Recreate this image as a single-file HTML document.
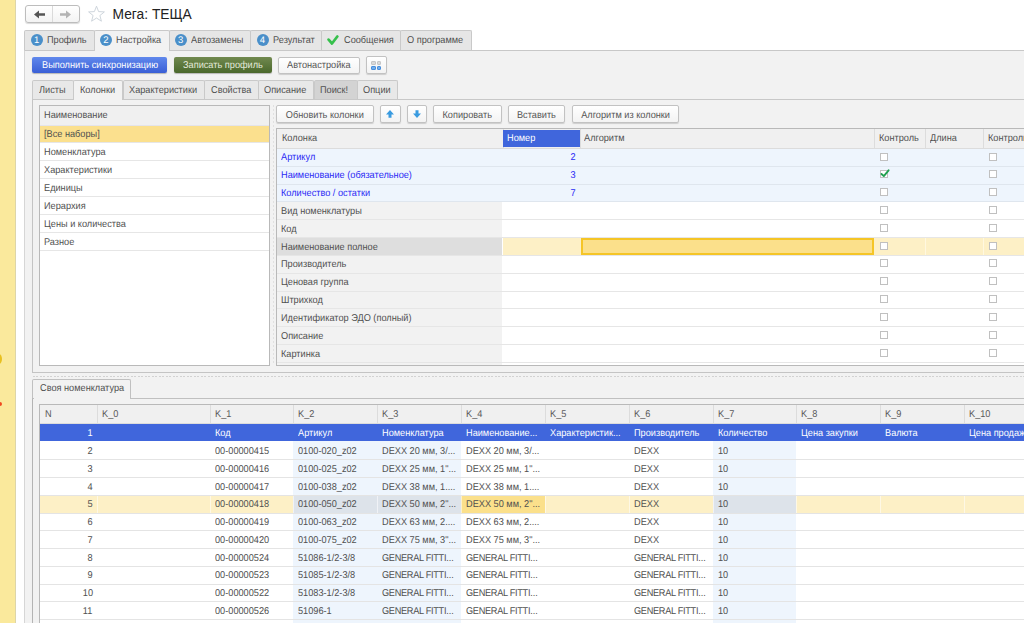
<!DOCTYPE html><html><head><meta charset='utf-8'><style>
*{margin:0;padding:0;box-sizing:border-box}
html,body{width:1024px;height:623px;overflow:hidden;background:#fff;font-family:"Liberation Sans",sans-serif;font-size:9.9px;color:#505050;text-rendering:geometricPrecision}
.a{position:absolute}
.t{position:absolute;white-space:nowrap;line-height:1;transform:scaleX(0.93);transform-origin:0 0}
.r{transform-origin:100% 0}
.c{transform-origin:50% 0}
.btn{position:absolute;border:1px solid #c2c2c2;border-radius:2px;background:linear-gradient(#fff,#f3f3f3);box-shadow:0 1px 1px rgba(0,0,0,.15)}
.bt{color:#555}
</style></head><body>
<div class='a' style='left:0px;top:0px;width:16px;height:623px;background:#fae99c;border-right:1px solid #ddd5a8'></div>
<div class='a' style='left:-4px;top:354px;width:6px;height:10px;background:#e8c020;border-radius:50%'></div>
<div class='a' style='left:-3px;top:402px;width:5px;height:4px;background:#f04a20;border-radius:50%'></div>
<div class='btn' style='left:24.5px;top:5px;width:55px;height:18px;border-radius:3px;border-color:#bdbdbd'></div>
<div class='a' style='left:52px;top:6px;width:1px;height:16px;background:#dadada'></div>
<svg class='a' style='left:31.5px;top:9px' width='16' height='11' viewBox='0 0 16 11'><path d='M2 5.5 L7 1.5 V4.3 H13 V6.7 H7 V9.5 Z' fill='#555'/></svg>
<svg class='a' style='left:57px;top:9px' width='16' height='11' viewBox='0 0 16 11'><path d='M14 5.5 L9 1.5 V4.3 H3 V6.7 H9 V9.5 Z' fill='#b4b4b4'/></svg>
<svg class='a' style='left:87px;top:5px' width='19' height='18' viewBox='0 0 19 18'><path d='M9.5 1.2 L11.6 6.6 L17.4 6.9 L12.9 10.5 L14.4 16.2 L9.5 13 L4.6 16.2 L6.1 10.5 L1.6 6.9 L7.4 6.6 Z' fill='none' stroke='#c8d0d8' stroke-width='0.9'/></svg>
<div class='t' style='left:112.5px;top:8.20px;color:#222;font-size:13.8px;transform:none;text-rendering:auto'>Мега: ТЕЩА</div>
<div class='a' style='left:24px;top:50px;width:1010px;height:600px;background:#f2f2f2;border-top:1px solid #c8c8c8;border-left:1px solid #d6d6d6'></div>
<div class='a' style='left:24px;top:30px;width:71px;height:20px;background:#e6e6e6;border:1px solid #c9c9c9;border-bottom:none;border-radius:2px 2px 0 0'></div>
<div class='a' style='left:30.700000000000003px;top:34px;width:12px;height:12px;border-radius:50%;background:#4a8fc9;color:#fff;font-size:9.5px;line-height:13px;text-align:center;font-weight:normal'>1</div>
<div class='t' style='left:47.2px;top:36.00px;color:#505050'>Профиль</div>
<div class='a' style='left:94px;top:30px;width:76px;height:21px;background:#f2f2f2;border:1px solid #c9c9c9;border-bottom:none;border-radius:2px 2px 0 0'></div>
<div class='a' style='left:99.8px;top:34px;width:12px;height:12px;border-radius:50%;background:#4a8fc9;color:#fff;font-size:9.5px;line-height:13px;text-align:center;font-weight:normal'>2</div>
<div class='t' style='left:116.3px;top:36.00px;color:#505050'>Настройка</div>
<div class='a' style='left:169px;top:30px;width:82px;height:20px;background:#e6e6e6;border:1px solid #c9c9c9;border-bottom:none;border-radius:2px 2px 0 0'></div>
<div class='a' style='left:174.6px;top:34px;width:12px;height:12px;border-radius:50%;background:#4a8fc9;color:#fff;font-size:9.5px;line-height:13px;text-align:center;font-weight:normal'>3</div>
<div class='t' style='left:191.1px;top:36.00px;color:#505050'>Автозамены</div>
<div class='a' style='left:250px;top:30px;width:72px;height:20px;background:#e6e6e6;border:1px solid #c9c9c9;border-bottom:none;border-radius:2px 2px 0 0'></div>
<div class='a' style='left:256.5px;top:34px;width:12px;height:12px;border-radius:50%;background:#4a8fc9;color:#fff;font-size:9.5px;line-height:13px;text-align:center;font-weight:normal'>4</div>
<div class='t' style='left:273.0px;top:36.00px;color:#505050'>Результат</div>
<div class='a' style='left:321px;top:30px;width:80px;height:20px;background:#e6e6e6;border:1px solid #c9c9c9;border-bottom:none;border-radius:2px 2px 0 0'></div>
<svg class='a' style='left:326px;top:34px' width='13' height='12' viewBox='0 0 13 12'><path d='M2.6 5.6 L6 9.5 L11.3 2.5' fill='none' stroke='#36c04c' stroke-width='2.7' stroke-linecap='round' stroke-linejoin='round'/></svg>
<div class='t' style='left:343.8px;top:36.00px;color:#505050'>Сообщения</div>
<div class='a' style='left:400px;top:30px;width:72px;height:20px;background:#e6e6e6;border:1px solid #c9c9c9;border-bottom:none;border-radius:2px 2px 0 0'></div>
<div class='t' style='left:407.1px;top:36.00px;color:#505050'>О программе</div>
<div class='a' style='left:32px;top:57px;width:135px;height:16px;border-radius:2px;background:linear-gradient(#6088ec,#3a5fd6);box-shadow:0 1px 1px rgba(0,0,0,.25)'></div>
<div class='t' style='left:41.5px;top:61.00px;color:#fff'>Выполнить синхронизацию</div>
<div class='a' style='left:174px;top:57px;width:98px;height:16px;border-radius:2px;background:linear-gradient(#71894f,#4a682c);box-shadow:0 1px 1px rgba(0,0,0,.25)'></div>
<div class='t' style='left:182.8px;top:61.00px;color:#e4eadb'>Записать профиль</div>
<div class='btn' style='left:277.8px;top:56.5px;width:82px;height:17px;'></div>
<div class='t' style='left:287px;top:61.00px;color:#555'>Автонастройка</div>
<div class='btn' style='left:365.8px;top:56.2px;width:21px;height:17.4px;'></div>
<div class='a' style='left:371px;top:61px;width:4.5px;height:3.5px;background:#dadada;border:1px solid #c6c6c6;border-radius:1px'></div>
<div class='a' style='left:376.5px;top:61px;width:4.5px;height:3.5px;background:#dadada;border:1px solid #c6c6c6;border-radius:1px'></div>
<div class='a' style='left:371px;top:65.5px;width:4.5px;height:4.5px;background:#72aeec;border:1px solid #4a8fdc;border-radius:1px'></div>
<div class='a' style='left:376.5px;top:65.5px;width:4.5px;height:4.5px;background:#72aeec;border:1px solid #4a8fdc;border-radius:1px'></div>
<div class='a' style='left:32px;top:80px;width:41.7px;height:19px;background:#e8e8e8;border:1px solid #c9c9c9;border-bottom:none;border-radius:2px 2px 0 0'></div>
<div class='t' style='left:38.80px;top:86px'>Листы</div>
<div class='a' style='left:72.7px;top:80px;width:50.8px;height:20px;background:#f2f2f2;border:1px solid #c9c9c9;border-bottom:none;border-radius:2px 2px 0 0'></div>
<div class='t' style='left:79.50px;top:86px'>Колонки</div>
<div class='a' style='left:122.5px;top:80px;width:82.5px;height:19px;background:#e8e8e8;border:1px solid #c9c9c9;border-bottom:none;border-radius:2px 2px 0 0'></div>
<div class='t' style='left:129.30px;top:86px'>Характеристики</div>
<div class='a' style='left:204px;top:80px;width:54.60000000000002px;height:19px;background:#e8e8e8;border:1px solid #c9c9c9;border-bottom:none;border-radius:2px 2px 0 0'></div>
<div class='t' style='left:210.80px;top:86px'>Свойства</div>
<div class='a' style='left:257.6px;top:80px;width:56.89999999999998px;height:19px;background:#e8e8e8;border:1px solid #c9c9c9;border-bottom:none;border-radius:2px 2px 0 0'></div>
<div class='t' style='left:264.40px;top:86px'>Описание</div>
<div class='a' style='left:313.5px;top:80px;width:44.0px;height:19px;background:#d3d3d3;border:1px solid #c9c9c9;border-bottom:none;border-radius:2px 2px 0 0'></div>
<div class='t' style='left:320.30px;top:86px'>Поиск!</div>
<div class='a' style='left:356.5px;top:80px;width:41.80000000000001px;height:19px;background:#e8e8e8;border:1px solid #c9c9c9;border-bottom:none;border-radius:2px 2px 0 0'></div>
<div class='t' style='left:363.30px;top:86px'>Опции</div>
<div class='a' style='left:32px;top:99px;width:1000px;height:273.5px;border-top:1px solid #c8c8c8;border-left:1px solid #c4c4c4;border-bottom:1px solid #c4c4c4'></div>
<div class='a' style='left:73.7px;top:99px;width:48.8px;height:1px;background:#f2f2f2'></div>
<div class='a' style='left:95px;top:50px;width:74px;height:1px;background:#f2f2f2'></div>
<div class='a' style='left:39px;top:105px;width:231px;height:261px;background:#fff;border:1px solid #b9b9b9'></div>
<div class='a' style='left:40px;top:106px;width:229px;height:19px;background:#f0f0f0'></div>
<div class='a' style='left:40px;top:125px;width:229px;height:1px;background:#e4e4ea'></div>
<div class='t' style='left:44.2px;top:111.00px;'>Наименование</div>
<div class='a' style='left:40px;top:126px;width:229px;height:16px;background:#fbe08e'></div>
<div class='a' style='left:40px;top:142px;width:229px;height:1px;background:#e6e6e6'></div>
<div class='t' style='left:44.2px;top:130.00px;'>[Все наборы]</div>
<div class='a' style='left:40px;top:160px;width:229px;height:1px;background:#e6e6e6'></div>
<div class='t' style='left:44.2px;top:148.00px;'>Номенклатура</div>
<div class='a' style='left:40px;top:178px;width:229px;height:1px;background:#e6e6e6'></div>
<div class='t' style='left:44.2px;top:166.00px;'>Характеристики</div>
<div class='a' style='left:40px;top:196px;width:229px;height:1px;background:#e6e6e6'></div>
<div class='t' style='left:44.2px;top:184.00px;'>Единицы</div>
<div class='a' style='left:40px;top:214px;width:229px;height:1px;background:#e6e6e6'></div>
<div class='t' style='left:44.2px;top:202.00px;'>Иерархия</div>
<div class='a' style='left:40px;top:232px;width:229px;height:1px;background:#e6e6e6'></div>
<div class='t' style='left:44.2px;top:220.00px;'>Цены и количества</div>
<div class='a' style='left:40px;top:250px;width:229px;height:1px;background:#e6e6e6'></div>
<div class='t' style='left:44.2px;top:238.00px;'>Разное</div>
<div class='a' style='left:272.5px;top:105px;width:1px;height:260px;background:repeating-linear-gradient(#e0e0e0 0 2px,transparent 2px 4px)'></div>
<div class='a' style='left:32.5px;top:375.5px;width:992px;height:1px;background:repeating-linear-gradient(90deg,#d2d2d2 0 2px,transparent 2px 3.5px)'></div>
<div class='btn' style='left:276px;top:105px;width:97.60000000000002px;height:17.6px;'></div>
<div class='t c bt' style='left:276px;width:97.60000000000002px;text-align:center;top:111px'>Обновить колонки</div>
<div class='btn' style='left:380px;top:105px;width:20.5px;height:17.6px;'></div>
<div class='btn' style='left:406.5px;top:105px;width:20.30000000000001px;height:17.6px;'></div>
<div class='btn' style='left:433.4px;top:105px;width:68.5px;height:17.6px;'></div>
<div class='t c bt' style='left:433.4px;width:68.5px;text-align:center;top:111px'>Копировать</div>
<div class='btn' style='left:508.4px;top:105px;width:56.89999999999998px;height:17.6px;'></div>
<div class='t c bt' style='left:508.4px;width:56.89999999999998px;text-align:center;top:111px'>Вставить</div>
<div class='btn' style='left:571.6px;top:105px;width:107.19999999999993px;height:17.6px;'></div>
<div class='t c bt' style='left:571.6px;width:107.19999999999993px;text-align:center;top:111px'>Алгоритм из колонки</div>
<svg class='a' style='left:385px;top:109px' width='10' height='10' viewBox='0 0 10 10'><path d='M5 1 L9 5.5 H6.5 V8.8 H3.5 V5.5 H1 Z' fill='#3a9be0'/></svg>
<svg class='a' style='left:411.5px;top:109px' width='10' height='10' viewBox='0 0 10 10'><path d='M5 9 L9 4.5 H6.5 V1.2 H3.5 V4.5 H1 Z' fill='#3a9be0'/></svg>
<div class='a' style='left:276px;top:128px;width:760px;height:238px;background:#fff;border:1px solid #b9b9b9'></div>
<div class='a' style='left:277px;top:129px;width:760px;height:19px;background:#f0f0f0'></div>
<div class='a' style='left:277px;top:148px;width:760px;height:1px;background:#dcdcdc'></div>
<div class='a' style='left:503px;top:129px;width:1px;height:19px;background:#dcdcdc'></div>
<div class='a' style='left:580px;top:129px;width:1px;height:19px;background:#dcdcdc'></div>
<div class='a' style='left:874px;top:129px;width:1px;height:19px;background:#dcdcdc'></div>
<div class='a' style='left:925px;top:129px;width:1px;height:19px;background:#dcdcdc'></div>
<div class='a' style='left:983px;top:129px;width:1px;height:19px;background:#dcdcdc'></div>
<div class='a' style='left:503px;top:130px;width:77px;height:17px;background:#4066dc'></div>
<div class='t' style='left:281.59999999999997px;top:134.00px;color:#505050'>Колонка</div>
<div class='t' style='left:507.1px;top:134.00px;color:#fff'>Номер</div>
<div class='t' style='left:584.1999999999999px;top:134.00px;color:#505050'>Алгоритм</div>
<div class='t' style='left:878.5px;top:134.00px;color:#505050'>Контроль</div>
<div class='t' style='left:929.6999999999999px;top:134.00px;color:#505050'>Длина</div>
<div class='t' style='left:987.6999999999999px;top:134.00px;color:#505050'>Контроль</div>
<div class='a' style='left:277px;top:148px;width:760px;height:18px;background:#eef5fd'></div>
<div class='a' style='left:277px;top:166px;width:760px;height:18px;background:#eef5fd'></div>
<div class='a' style='left:277px;top:184px;width:760px;height:17px;background:#eef5fd'></div>
<div class='a' style='left:277px;top:202px;width:225px;height:17px;background:#f2f2f2'></div>
<div class='a' style='left:277px;top:220px;width:225px;height:17px;background:#f2f2f2'></div>
<div class='a' style='left:277px;top:238px;width:225px;height:17px;background:#dedede'></div>
<div class='a' style='left:503px;top:238px;width:760px;height:17px;background:#fdf0c6'></div>
<div class='a' style='left:277px;top:256px;width:225px;height:17px;background:#f2f2f2'></div>
<div class='a' style='left:277px;top:274px;width:225px;height:17px;background:#f2f2f2'></div>
<div class='a' style='left:277px;top:292px;width:225px;height:16px;background:#f2f2f2'></div>
<div class='a' style='left:277px;top:309px;width:225px;height:17px;background:#f2f2f2'></div>
<div class='a' style='left:277px;top:327px;width:225px;height:17px;background:#f2f2f2'></div>
<div class='a' style='left:277px;top:345px;width:225px;height:20px;background:#f2f2f2'></div>
<div class='a' style='left:925px;top:238px;width:1px;height:17px;background:#fff8e0'></div>
<div class='a' style='left:983px;top:238px;width:1px;height:17px;background:#fff8e0'></div>
<div class='a' style='left:925px;top:238px;width:1px;height:17px;background:#fff8e0'></div>
<div class='a' style='left:277px;top:166px;width:760px;height:1px;background:#dfe6ee'></div>
<div class='a' style='left:277px;top:184px;width:760px;height:1px;background:#dfe6ee'></div>
<div class='a' style='left:277px;top:201px;width:760px;height:1px;background:#dfe6ee'></div>
<div class='a' style='left:277px;top:219px;width:760px;height:1px;background:#e6e6e6'></div>
<div class='a' style='left:277px;top:237px;width:760px;height:1px;background:#e6e6e6'></div>
<div class='a' style='left:277px;top:255px;width:760px;height:1px;background:#e6e6e6'></div>
<div class='a' style='left:277px;top:273px;width:760px;height:1px;background:#e6e6e6'></div>
<div class='a' style='left:277px;top:291px;width:760px;height:1px;background:#e6e6e6'></div>
<div class='a' style='left:277px;top:308px;width:760px;height:1px;background:#e6e6e6'></div>
<div class='a' style='left:277px;top:326px;width:760px;height:1px;background:#e6e6e6'></div>
<div class='a' style='left:277px;top:344px;width:760px;height:1px;background:#e6e6e6'></div>
<div class='a' style='left:277px;top:362px;width:760px;height:1px;background:#e6e6e6'></div>
<div class='a' style='left:277px;top:148px;width:760px;height:1px;background:#dcdcdc'></div>
<div class='t' style='left:281.2px;top:153.00px;color:#2a2af5'>Артикул</div>
<div class='t r' style='right:448.20000000000005px;top:153.00px;color:#2a2af5'>2</div>
<div class='a' style='left:880px;top:152.5px;width:8px;height:8px;background:#fff;border:1px solid #c0c0c0'></div>
<div class='a' style='left:989px;top:152.5px;width:8px;height:8px;background:#fff;border:1px solid #c0c0c0'></div>
<div class='t' style='left:281.2px;top:171.00px;color:#2a2af5'>Наименование (обязательное)</div>
<div class='t r' style='right:448.20000000000005px;top:171.00px;color:#2a2af5'>3</div>
<div class='a' style='left:880px;top:170.32999999999998px;width:8px;height:8px;background:#fff;border:1px solid #c0c0c0'></div>
<div class='a' style='left:989px;top:170.32999999999998px;width:8px;height:8px;background:#fff;border:1px solid #c0c0c0'></div>
<svg class='a' style='left:879px;top:168.1px' width='12' height='11' viewBox='0 0 12 11'><path d='M2.5 6 L4.8 8.1 L9.6 2.3' fill='none' stroke='#21a050' stroke-width='1.9' stroke-linecap='round' stroke-linejoin='round'/></svg>
<div class='t' style='left:281.2px;top:189.00px;color:#2a2af5'>Количество / остатки</div>
<div class='t r' style='right:448.20000000000005px;top:189.00px;color:#2a2af5'>7</div>
<div class='a' style='left:880px;top:188.16px;width:8px;height:8px;background:#fff;border:1px solid #c0c0c0'></div>
<div class='a' style='left:989px;top:188.16px;width:8px;height:8px;background:#fff;border:1px solid #c0c0c0'></div>
<div class='t' style='left:281.2px;top:207.00px;color:#505050'>Вид номенклатуры</div>
<div class='a' style='left:880px;top:205.99px;width:8px;height:8px;background:#fff;border:1px solid #c0c0c0'></div>
<div class='a' style='left:989px;top:205.99px;width:8px;height:8px;background:#fff;border:1px solid #c0c0c0'></div>
<div class='t' style='left:281.2px;top:225.00px;color:#505050'>Код</div>
<div class='a' style='left:880px;top:223.82px;width:8px;height:8px;background:#fff;border:1px solid #c0c0c0'></div>
<div class='a' style='left:989px;top:223.82px;width:8px;height:8px;background:#fff;border:1px solid #c0c0c0'></div>
<div class='t' style='left:281.2px;top:243.00px;color:#505050'>Наименование полное</div>
<div class='a' style='left:880px;top:241.64999999999998px;width:8px;height:8px;background:#fff;border:1px solid #c0c0c0'></div>
<div class='a' style='left:989px;top:241.64999999999998px;width:8px;height:8px;background:#fff;border:1px solid #c0c0c0'></div>
<div class='t' style='left:281.2px;top:260.00px;color:#505050'>Производитель</div>
<div class='a' style='left:880px;top:259.48px;width:8px;height:8px;background:#fff;border:1px solid #c0c0c0'></div>
<div class='a' style='left:989px;top:259.48px;width:8px;height:8px;background:#fff;border:1px solid #c0c0c0'></div>
<div class='t' style='left:281.2px;top:278.00px;color:#505050'>Ценовая группа</div>
<div class='a' style='left:880px;top:277.31px;width:8px;height:8px;background:#fff;border:1px solid #c0c0c0'></div>
<div class='a' style='left:989px;top:277.31px;width:8px;height:8px;background:#fff;border:1px solid #c0c0c0'></div>
<div class='t' style='left:281.2px;top:296.00px;color:#505050'>Штрихкод</div>
<div class='a' style='left:880px;top:295.14px;width:8px;height:8px;background:#fff;border:1px solid #c0c0c0'></div>
<div class='a' style='left:989px;top:295.14px;width:8px;height:8px;background:#fff;border:1px solid #c0c0c0'></div>
<div class='t' style='left:281.2px;top:314.00px;color:#505050'>Идентификатор ЭДО (полный)</div>
<div class='a' style='left:880px;top:312.96999999999997px;width:8px;height:8px;background:#fff;border:1px solid #c0c0c0'></div>
<div class='a' style='left:989px;top:312.96999999999997px;width:8px;height:8px;background:#fff;border:1px solid #c0c0c0'></div>
<div class='t' style='left:281.2px;top:332.00px;color:#505050'>Описание</div>
<div class='a' style='left:880px;top:330.79999999999995px;width:8px;height:8px;background:#fff;border:1px solid #c0c0c0'></div>
<div class='a' style='left:989px;top:330.79999999999995px;width:8px;height:8px;background:#fff;border:1px solid #c0c0c0'></div>
<div class='t' style='left:281.2px;top:350.00px;color:#505050'>Картинка</div>
<div class='a' style='left:880px;top:348.63px;width:8px;height:8px;background:#fff;border:1px solid #c0c0c0'></div>
<div class='a' style='left:989px;top:348.63px;width:8px;height:8px;background:#fff;border:1px solid #c0c0c0'></div>
<div class='a' style='left:581px;top:238px;width:293px;height:17px;background:#fbe08b;border:2px solid #f5c526'></div>
<div class='a' style='left:32px;top:379px;width:98.5px;height:20px;background:#f2f2f2;border:1px solid #c0c0c0;border-bottom:none;border-radius:2px 2px 0 0'></div>
<div class='t' style='left:39.5px;top:384.00px;'>Своя номенклатура</div>
<div class='a' style='left:32px;top:398px;width:1000px;height:300px;border-top:1px solid #c0c0c0;border-left:1px solid #b4b4b4'></div>
<div class='a' style='left:33.5px;top:398px;width:96.5px;height:1px;background:#f2f2f2'></div>
<div class='a' style='left:39px;top:404px;width:1000px;height:300px;background:#fff;border:1px solid #b9b9b9'></div>
<div class='a' style='left:40px;top:405px;width:1000px;height:19px;background:#f0f0f0'></div>
<div class='a' style='left:40px;top:423px;width:1000px;height:1px;background:#dcdcdc'></div>
<div class='a' style='left:97px;top:405px;width:1px;height:18px;background:#dcdcdc'></div>
<div class='a' style='left:210px;top:405px;width:1px;height:18px;background:#dcdcdc'></div>
<div class='a' style='left:293px;top:405px;width:1px;height:18px;background:#dcdcdc'></div>
<div class='a' style='left:377px;top:405px;width:1px;height:18px;background:#dcdcdc'></div>
<div class='a' style='left:461px;top:405px;width:1px;height:18px;background:#dcdcdc'></div>
<div class='a' style='left:545px;top:405px;width:1px;height:18px;background:#dcdcdc'></div>
<div class='a' style='left:629px;top:405px;width:1px;height:18px;background:#dcdcdc'></div>
<div class='a' style='left:713px;top:405px;width:1px;height:18px;background:#dcdcdc'></div>
<div class='a' style='left:796px;top:405px;width:1px;height:18px;background:#dcdcdc'></div>
<div class='a' style='left:880px;top:405px;width:1px;height:18px;background:#dcdcdc'></div>
<div class='a' style='left:964px;top:405px;width:1px;height:18px;background:#dcdcdc'></div>
<div class='t' style='left:44.8px;top:410.00px;color:#5a5a5a'>N</div>
<div class='t' style='left:102.3px;top:410.00px;color:#5a5a5a'>K_0</div>
<div class='t' style='left:215.3px;top:410.00px;color:#5a5a5a'>K_1</div>
<div class='t' style='left:298.3px;top:410.00px;color:#5a5a5a'>K_2</div>
<div class='t' style='left:382.3px;top:410.00px;color:#5a5a5a'>K_3</div>
<div class='t' style='left:466.3px;top:410.00px;color:#5a5a5a'>K_4</div>
<div class='t' style='left:550.3px;top:410.00px;color:#5a5a5a'>K_5</div>
<div class='t' style='left:634.3px;top:410.00px;color:#5a5a5a'>K_6</div>
<div class='t' style='left:718.3px;top:410.00px;color:#5a5a5a'>K_7</div>
<div class='t' style='left:801.3px;top:410.00px;color:#5a5a5a'>K_8</div>
<div class='t' style='left:885.3px;top:410.00px;color:#5a5a5a'>K_9</div>
<div class='t' style='left:969.3px;top:410.00px;color:#5a5a5a'>K_10</div>
<div class='a' style='left:40px;top:424px;width:1000px;height:17px;background:#4066dc'></div>
<div class='a' style='left:293px;top:441px;width:84px;height:19px;background:#eef5fd'></div>
<div class='a' style='left:377px;top:441px;width:84px;height:19px;background:#eef5fd'></div>
<div class='a' style='left:713px;top:441px;width:83px;height:19px;background:#eef5fd'></div>
<div class='a' style='left:293px;top:459px;width:84px;height:19px;background:#eef5fd'></div>
<div class='a' style='left:377px;top:459px;width:84px;height:19px;background:#eef5fd'></div>
<div class='a' style='left:713px;top:459px;width:83px;height:19px;background:#eef5fd'></div>
<div class='a' style='left:293px;top:477px;width:84px;height:19px;background:#eef5fd'></div>
<div class='a' style='left:377px;top:477px;width:84px;height:19px;background:#eef5fd'></div>
<div class='a' style='left:713px;top:477px;width:83px;height:19px;background:#eef5fd'></div>
<div class='a' style='left:40px;top:496px;width:1000px;height:17px;background:#fdf0c6'></div>
<div class='a' style='left:293px;top:496px;width:84px;height:17px;background:#dde3ea'></div>
<div class='a' style='left:377px;top:496px;width:84px;height:17px;background:#dde3ea'></div>
<div class='a' style='left:713px;top:496px;width:83px;height:17px;background:#dde3ea'></div>
<div class='a' style='left:461px;top:496px;width:84px;height:17px;background:#fbe08b'></div>
<div class='a' style='left:97px;top:496px;width:1px;height:17px;background:rgba(255,255,255,.55)'></div>
<div class='a' style='left:210px;top:496px;width:1px;height:17px;background:rgba(255,255,255,.55)'></div>
<div class='a' style='left:293px;top:496px;width:1px;height:17px;background:rgba(255,255,255,.55)'></div>
<div class='a' style='left:377px;top:496px;width:1px;height:17px;background:rgba(255,255,255,.55)'></div>
<div class='a' style='left:461px;top:496px;width:1px;height:17px;background:rgba(255,255,255,.55)'></div>
<div class='a' style='left:545px;top:496px;width:1px;height:17px;background:rgba(255,255,255,.55)'></div>
<div class='a' style='left:629px;top:496px;width:1px;height:17px;background:rgba(255,255,255,.55)'></div>
<div class='a' style='left:713px;top:496px;width:1px;height:17px;background:rgba(255,255,255,.55)'></div>
<div class='a' style='left:796px;top:496px;width:1px;height:17px;background:rgba(255,255,255,.55)'></div>
<div class='a' style='left:880px;top:496px;width:1px;height:17px;background:rgba(255,255,255,.55)'></div>
<div class='a' style='left:964px;top:496px;width:1px;height:17px;background:rgba(255,255,255,.55)'></div>
<div class='a' style='left:293px;top:513px;width:84px;height:18px;background:#eef5fd'></div>
<div class='a' style='left:377px;top:513px;width:84px;height:18px;background:#eef5fd'></div>
<div class='a' style='left:713px;top:513px;width:83px;height:18px;background:#eef5fd'></div>
<div class='a' style='left:293px;top:530px;width:84px;height:19px;background:#eef5fd'></div>
<div class='a' style='left:377px;top:530px;width:84px;height:19px;background:#eef5fd'></div>
<div class='a' style='left:713px;top:530px;width:83px;height:19px;background:#eef5fd'></div>
<div class='a' style='left:293px;top:548px;width:84px;height:19px;background:#eef5fd'></div>
<div class='a' style='left:377px;top:548px;width:84px;height:19px;background:#eef5fd'></div>
<div class='a' style='left:713px;top:548px;width:83px;height:19px;background:#eef5fd'></div>
<div class='a' style='left:293px;top:566px;width:84px;height:19px;background:#eef5fd'></div>
<div class='a' style='left:377px;top:566px;width:84px;height:19px;background:#eef5fd'></div>
<div class='a' style='left:713px;top:566px;width:83px;height:19px;background:#eef5fd'></div>
<div class='a' style='left:293px;top:584px;width:84px;height:18px;background:#eef5fd'></div>
<div class='a' style='left:377px;top:584px;width:84px;height:18px;background:#eef5fd'></div>
<div class='a' style='left:713px;top:584px;width:83px;height:18px;background:#eef5fd'></div>
<div class='a' style='left:293px;top:601px;width:84px;height:19px;background:#eef5fd'></div>
<div class='a' style='left:377px;top:601px;width:84px;height:19px;background:#eef5fd'></div>
<div class='a' style='left:713px;top:601px;width:83px;height:19px;background:#eef5fd'></div>
<div class='a' style='left:293px;top:619px;width:84px;height:19px;background:#eef5fd'></div>
<div class='a' style='left:377px;top:619px;width:84px;height:19px;background:#eef5fd'></div>
<div class='a' style='left:713px;top:619px;width:83px;height:19px;background:#eef5fd'></div>
<div class='a' style='left:293px;top:637px;width:84px;height:19px;background:#eef5fd'></div>
<div class='a' style='left:377px;top:637px;width:84px;height:19px;background:#eef5fd'></div>
<div class='a' style='left:713px;top:637px;width:83px;height:19px;background:#eef5fd'></div>
<div class='a' style='left:40px;top:459px;width:1000px;height:1px;background:#e4e4e4'></div>
<div class='a' style='left:40px;top:477px;width:1000px;height:1px;background:#e4e4e4'></div>
<div class='a' style='left:40px;top:495px;width:1000px;height:1px;background:#e4e4e4'></div>
<div class='a' style='left:40px;top:513px;width:1000px;height:1px;background:#e4e4e4'></div>
<div class='a' style='left:40px;top:530px;width:1000px;height:1px;background:#e4e4e4'></div>
<div class='a' style='left:40px;top:548px;width:1000px;height:1px;background:#e4e4e4'></div>
<div class='a' style='left:40px;top:566px;width:1000px;height:1px;background:#e4e4e4'></div>
<div class='a' style='left:40px;top:584px;width:1000px;height:1px;background:#e4e4e4'></div>
<div class='a' style='left:40px;top:601px;width:1000px;height:1px;background:#e4e4e4'></div>
<div class='a' style='left:40px;top:619px;width:1000px;height:1px;background:#e4e4e4'></div>
<div class='a' style='left:40px;top:637px;width:1000px;height:1px;background:#e4e4e4'></div>
<div class='a' style='left:40px;top:655px;width:1000px;height:1px;background:#e4e4e4'></div>
<div class='t r' style='right:931.4px;top:429.00px;color:#fff'>1</div>
<div class='t' style='left:102.0px;top:429.00px;color:#fff'></div>
<div class='t' style='left:215.0px;top:429.00px;color:#fff'>Код</div>
<div class='t' style='left:298.0px;top:429.00px;color:#fff'>Артикул</div>
<div class='t' style='left:382.0px;top:429.00px;color:#fff'>Номенклатура</div>
<div class='t' style='left:466.0px;top:429.00px;color:#fff'>Наименование...</div>
<div class='t' style='left:550.0px;top:429.00px;color:#fff'>Характеристик...</div>
<div class='t' style='left:634.0px;top:429.00px;color:#fff'>Производитель</div>
<div class='t' style='left:718.0px;top:429.00px;color:#fff'>Количество</div>
<div class='t' style='left:801.0px;top:429.00px;color:#fff'>Цена закупки</div>
<div class='t' style='left:885.0px;top:429.00px;color:#fff'>Валюта</div>
<div class='t' style='left:969.0px;top:429.00px;color:#fff'>Цена продаж</div>
<div class='t r' style='right:931.4px;top:447.00px;'>2</div>
<div class='t' style='left:215.0px;top:447.00px;'>00-00000415</div>
<div class='t' style='left:298.0px;top:447.00px;'>0100-020_z02</div>
<div class='t' style='left:382.0px;top:447.00px;'>DEXX 20 мм, 3/...</div>
<div class='t' style='left:466.0px;top:447.00px;'>DEXX 20 мм, 3/...</div>
<div class='t' style='left:634.0px;top:447.00px;'>DEXX</div>
<div class='t' style='left:718.0px;top:447.00px;'>10</div>
<div class='t r' style='right:931.4px;top:465.00px;'>3</div>
<div class='t' style='left:215.0px;top:465.00px;'>00-00000416</div>
<div class='t' style='left:298.0px;top:465.00px;'>0100-025_z02</div>
<div class='t' style='left:382.0px;top:465.00px;'>DEXX 25 мм, 1"...</div>
<div class='t' style='left:466.0px;top:465.00px;'>DEXX 25 мм, 1"...</div>
<div class='t' style='left:634.0px;top:465.00px;'>DEXX</div>
<div class='t' style='left:718.0px;top:465.00px;'>10</div>
<div class='t r' style='right:931.4px;top:483.00px;'>4</div>
<div class='t' style='left:215.0px;top:483.00px;'>00-00000417</div>
<div class='t' style='left:298.0px;top:483.00px;'>0100-038_z02</div>
<div class='t' style='left:382.0px;top:483.00px;'>DEXX 38 мм, 1....</div>
<div class='t' style='left:466.0px;top:483.00px;'>DEXX 38 мм, 1....</div>
<div class='t' style='left:634.0px;top:483.00px;'>DEXX</div>
<div class='t' style='left:718.0px;top:483.00px;'>10</div>
<div class='t r' style='right:931.4px;top:500.00px;'>5</div>
<div class='t' style='left:215.0px;top:500.00px;'>00-00000418</div>
<div class='t' style='left:298.0px;top:500.00px;'>0100-050_z02</div>
<div class='t' style='left:382.0px;top:500.00px;'>DEXX 50 мм, 2"...</div>
<div class='t' style='left:466.0px;top:500.00px;'>DEXX 50 мм, 2"...</div>
<div class='t' style='left:634.0px;top:500.00px;'>DEXX</div>
<div class='t' style='left:718.0px;top:500.00px;'>10</div>
<div class='t r' style='right:931.4px;top:518.00px;'>6</div>
<div class='t' style='left:215.0px;top:518.00px;'>00-00000419</div>
<div class='t' style='left:298.0px;top:518.00px;'>0100-063_z02</div>
<div class='t' style='left:382.0px;top:518.00px;'>DEXX 63 мм, 2....</div>
<div class='t' style='left:466.0px;top:518.00px;'>DEXX 63 мм, 2....</div>
<div class='t' style='left:634.0px;top:518.00px;'>DEXX</div>
<div class='t' style='left:718.0px;top:518.00px;'>10</div>
<div class='t r' style='right:931.4px;top:536.00px;'>7</div>
<div class='t' style='left:215.0px;top:536.00px;'>00-00000420</div>
<div class='t' style='left:298.0px;top:536.00px;'>0100-075_z02</div>
<div class='t' style='left:382.0px;top:536.00px;'>DEXX 75 мм, 3"...</div>
<div class='t' style='left:466.0px;top:536.00px;'>DEXX 75 мм, 3"...</div>
<div class='t' style='left:634.0px;top:536.00px;'>DEXX</div>
<div class='t' style='left:718.0px;top:536.00px;'>10</div>
<div class='t r' style='right:931.4px;top:554.00px;'>8</div>
<div class='t' style='left:215.0px;top:554.00px;'>00-00000524</div>
<div class='t' style='left:298.0px;top:554.00px;'>51086-1/2-3/8</div>
<div class='t' style='left:382.0px;top:554.00px;'><span style='letter-spacing:-0.32px'>GENERAL FITTI</span>...</div>
<div class='t' style='left:466.0px;top:554.00px;'><span style='letter-spacing:-0.32px'>GENERAL FITTI</span>...</div>
<div class='t' style='left:634.0px;top:554.00px;'><span style='letter-spacing:-0.32px'>GENERAL FITTI</span>...</div>
<div class='t' style='left:718.0px;top:554.00px;'>10</div>
<div class='t r' style='right:931.4px;top:571.00px;'>9</div>
<div class='t' style='left:215.0px;top:571.00px;'>00-00000523</div>
<div class='t' style='left:298.0px;top:571.00px;'>51085-1/2-3/8</div>
<div class='t' style='left:382.0px;top:571.00px;'><span style='letter-spacing:-0.32px'>GENERAL FITTI</span>...</div>
<div class='t' style='left:466.0px;top:571.00px;'><span style='letter-spacing:-0.32px'>GENERAL FITTI</span>...</div>
<div class='t' style='left:634.0px;top:571.00px;'><span style='letter-spacing:-0.32px'>GENERAL FITTI</span>...</div>
<div class='t' style='left:718.0px;top:571.00px;'>10</div>
<div class='t r' style='right:931.4px;top:589.00px;'>10</div>
<div class='t' style='left:215.0px;top:589.00px;'>00-00000522</div>
<div class='t' style='left:298.0px;top:589.00px;'>51083-1/2-3/8</div>
<div class='t' style='left:382.0px;top:589.00px;'><span style='letter-spacing:-0.32px'>GENERAL FITTI</span>...</div>
<div class='t' style='left:466.0px;top:589.00px;'><span style='letter-spacing:-0.32px'>GENERAL FITTI</span>...</div>
<div class='t' style='left:634.0px;top:589.00px;'><span style='letter-spacing:-0.32px'>GENERAL FITTI</span>...</div>
<div class='t' style='left:718.0px;top:589.00px;'>10</div>
<div class='t r' style='right:931.4px;top:607.00px;'>11</div>
<div class='t' style='left:215.0px;top:607.00px;'>00-00000526</div>
<div class='t' style='left:298.0px;top:607.00px;'>51096-1</div>
<div class='t' style='left:382.0px;top:607.00px;'><span style='letter-spacing:-0.32px'>GENERAL FITTI</span>...</div>
<div class='t' style='left:466.0px;top:607.00px;'><span style='letter-spacing:-0.32px'>GENERAL FITTI</span>...</div>
<div class='t' style='left:634.0px;top:607.00px;'><span style='letter-spacing:-0.32px'>GENERAL FITTI</span>...</div>
<div class='t' style='left:718.0px;top:607.00px;'>10</div>
</body></html>
